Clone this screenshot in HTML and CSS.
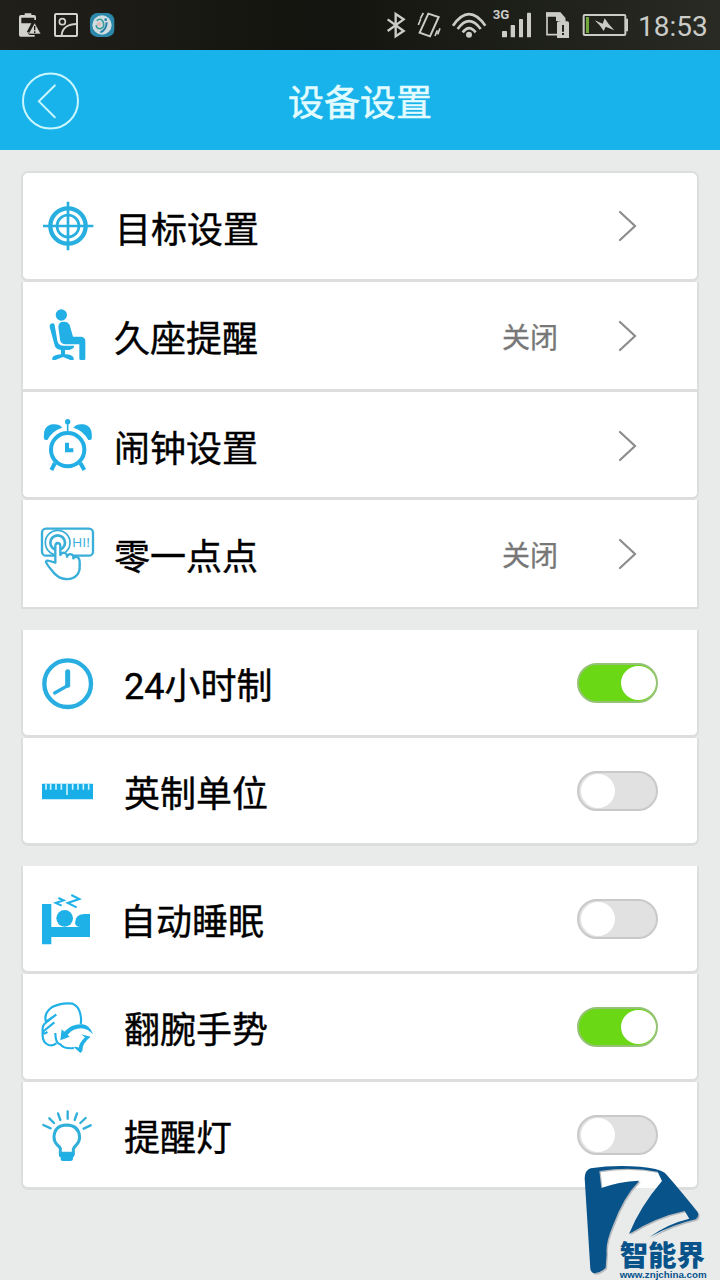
FILE: index.html
```html
<!DOCTYPE html>
<html lang="zh-CN">
<head>
<meta charset="utf-8">
<title>设备设置</title>
<link rel="stylesheet" href="styles.css">
</head>
<body>
<div class="screen">
  <div class="status">
    <svg class="status-left" viewBox="0 0 390 150">
      <path d="M74 45V40H94V45H102Q108 45 108 51V60H103V53H64V70H94L80 97H88V105H104V110H62Q57 110 57 105V51Q57 45 63 45Z" fill="#d2d2cf"/>
      <path d="M104 68L123 102H85Z" fill="#d2d2cf" stroke="#1c1b16" stroke-width="2"/>
      <path d="M104 78V91M104 94V99" stroke="#1c1b16" stroke-width="4"/>
      <rect x="165" y="42" width="66" height="66" rx="3" fill="none" stroke="#d2d2cf" stroke-width="6"/>
      <circle cx="187" cy="65" r="9" fill="none" stroke="#d2d2cf" stroke-width="5"/>
      <path d="M185 105C187 83 205 72 230 72" fill="none" stroke="#d2d2cf" stroke-width="6"/>
      <rect x="270" y="39" width="73" height="72" rx="22" fill="#2b88aa"/>
      <circle cx="306" cy="75" r="29" fill="#cfdde0"/>
      <path d="M290 62Q302 52 309 65Q316 82 302 86Q288 87 289 75" fill="none" stroke="#3c9a9b" stroke-width="5"/>
      <path d="M320 67Q319 91 301 97" fill="none" stroke="#287eab" stroke-width="6"/>
      <circle cx="317" cy="59" r="4" fill="#287eab"/>
      <circle cx="297" cy="72" r="6" fill="#e6b9b4"/>
    </svg>
    <svg class="status-right" viewBox="30 0 750 150">
      <g fill="none" stroke="#cbccc8">
        <path d="M53 58L101 93L77 109V42L101 58L53 93" stroke-width="7"/>
        <path d="M175 41L206 51L180 109L149 98Z" stroke-width="6"/>
        <path d="M152 57L145 75M160 39L151 56M202 91L195 108M210 85L203 103" stroke-width="5"/>
        <path d="M249 77Q297 8 346 77" stroke-width="8"/>
        <path d="M263 87Q297 40 332 87" stroke-width="8"/>
        <path d="M278 97Q297 72 317 97" stroke-width="8"/>
        <path d="M561 104H531V40H570L583 54V63" stroke-width="5"/>
        <rect x="641" y="45" width="125" height="60" rx="3" stroke-width="6"/>
      </g>
      <g fill="#cbccc8">
        <circle cx="297" cy="104" r="9"/>
        <rect x="396" y="93" width="15" height="19" rx="2"/>
        <rect x="422" y="75" width="13" height="37" rx="2"/>
        <rect x="447" y="57" width="12" height="55" rx="2"/>
        <rect x="471" y="38" width="12" height="74" rx="2"/>
        <path d="M528 37H571L586 54V63H558V50H528Z"/>
        <path d="M561 69Q561 64 566 64H571V59H586V64H592Q597 64 597 69V114H561Z"/>
        <path d="M768 56H774V94H768Z"/>
        <path d="M674 61L698 71L704 55L716 72L733 91L707 80L701 93L689 76Z"/>
      </g>
      <path d="M579 75V95M579 99V105" stroke="#22231d" stroke-width="6"/>
      <rect x="648" y="51" width="9" height="48" fill="#70a83c"/>
      <text class="network" x="368" y="56" textLength="50" lengthAdjust="spacingAndGlyphs">3G</text>
    </svg>
    <span class="clock">18:53</span>
  </div>

  <header class="header">
    <svg class="back" viewBox="66 214 172 174" fill="none" stroke="#c9f6ff">
      <circle cx="152" cy="301" r="83" stroke-width="6"/>
      <path d="M165 254L117 302L165 350" stroke-width="6" stroke-linecap="round"/>
    </svg>
    <h1 class="title">设备设置</h1>
  </header>

  <main class="list">
    <section class="group">
      <div class="row row-first">
        <svg class="icon" viewBox="84 39 180 318" fill="none" stroke="#28afe0">
          <circle cx="174" cy="198" r="53" stroke-width="13"/>
          <circle cx="174" cy="198" r="33" stroke-width="8"/>
          <path d="M174 125V271M99 198H250" stroke-width="8"/>
        </svg>
        <span class="label">目标设置</span>
        <svg class="arrow" viewBox="0 0 20 34"><path d="M2 3L17 17L2 31"/></svg>
      </div>
      <div class="row row-second">
        <svg class="icon" viewBox="84 366 180 321" fill="#22afe5">
          <circle cx="154" cy="465" r="17"/>
          <path d="M145 500Q146 485 160 485Q174 484 179 495L189 530H214Q225 531 226 542V597Q226 600 222 600H213Q208 600 208 596V553H165Q151 551 150 538Z"/>
          <path d="M119 501Q118 490 129 490Q133 490 134 496L142 542Q145 557 162 557H192V561Q188 569 174 570H165V583Q188 584 191 594V600H181L159 591L136 600H127V594Q129 585 153 583V570Q137 569 134 556Z"/>
        </svg>
        <span class="label">久座提醒</span><span class="value">关闭</span>
        <svg class="arrow" viewBox="0 0 20 34"><path d="M2 3L17 17L2 31"/></svg>
      </div>
      <div class="row row-third">
        <svg class="icon" viewBox="84 36 180 315" fill="#22afe5">
          <path d="M102 177Q98 137 127 133Q148 131 157 143Q128 151 112 180Q105 181 102 177ZM245 177Q249 137 220 133Q199 131 190 143Q219 151 235 180Q242 181 245 177Z"/>
          <circle cx="173" cy="209" r="50" fill="none" stroke="#22afe5" stroke-width="12"/>
          <circle cx="173" cy="125" r="8"/>
          <path d="M173 125V155" stroke="#22afe5" stroke-width="5"/>
          <path d="M171 188V211H190M135 249L124 270M211 249L223 270" fill="none" stroke="#22afe5" stroke-width="12"/>
        </svg>
        <span class="label">闹钟设置</span>
        <svg class="arrow" viewBox="0 0 20 34"><path d="M2 3L17 17L2 31"/></svg>
      </div>
      <div class="row row-fourth">
        <svg class="icon" viewBox="84 360 180 321" fill="none" stroke="#38aed9">
          <rect x="96" y="446" width="153" height="81" rx="12" stroke-width="7"/>
          <circle cx="143" cy="488" r="37" stroke-width="5"/>
          <circle cx="143" cy="488" r="22" stroke-width="8"/>
          <path d="M136 548V497Q137 489 143 489Q151 490 151 498V525Q155 516 164 519Q171 521 171 530Q176 519 186 524Q191 528 190 535Q199 526 206 535Q210 540 209 557Q210 575 201 585Q189 599 166 597Q143 595 127 573Q110 553 108 546Q109 540 119 543Z" fill="#fff" stroke-width="7" stroke-linejoin="round"/>
          <text class="hi" x="186" y="501" textLength="54" lengthAdjust="spacingAndGlyphs">HI!</text>
        </svg>
        <span class="label">零一点点</span><span class="value">关闭</span>
        <svg class="arrow" viewBox="0 0 20 34"><path d="M2 3L17 17L2 31"/></svg>
      </div>
    </section>

    <section class="group">
      <div class="row indented">
        <svg class="icon" viewBox="84 30 180 315" fill="none" stroke="#28aee0">
          <circle cx="173" cy="191" r="70" stroke-width="13"/>
          <path d="M173 155V196" stroke-width="15" stroke-linecap="round"/>
          <path d="M173 197L134 219" stroke-width="10" stroke-linecap="round"/>
        </svg>
        <span class="label">24小时制</span><span class="switch on"></span>
      </div>
      <div class="row indented">
        <svg class="icon" viewBox="84 354 180 315">
          <rect x="96" y="491" width="153" height="47" rx="2" fill="#18afe8"/>
          <path d="M108 492V509M122 492V509M138 492V509M154 492V509M171 492V525M188 492V509M204 492V509M220 492V509M236 492V509" stroke="#c6f3ff" stroke-width="5"/>
        </svg>
        <span class="label">英制单位</span><span class="switch"></span>
      </div>
    </section>

    <section class="group">
      <div class="row indented sleep">
        <svg class="icon" viewBox="84 18 180 315" fill="#1eb1e8">
          <path d="M96 132H124V201H211Q197 201 195 190Q195 163 222 162H240V231H124V253H96Z"/>
          <circle cx="164" cy="175" r="25"/>
          <path d="M145 114L161 121L137 129L155 137M184 105L208 117L173 129L200 142" fill="none" stroke="#1eb1e8" stroke-width="6"/>
        </svg>
        <span class="label">自动睡眠</span><span class="switch"></span>
      </div>
      <div class="row indented">
        <svg class="icon" viewBox="84 342 180 315" fill="none" stroke="#22b1e6" stroke-width="6.5" stroke-linejoin="round">
          <path d="M139 464L108 485Q100 461 125 442Q154 427 188 431Q206 438 211 462Q215 480 212 492M138 464L103 492Q96 500 98 516L133 487M98 516Q95 547 116 555Q130 559 139 550M98 516Q105 525 112 515M136 519Q136 551 151 553Q163 568 192 564"/>
          <path d="M151 541L155 508L163 515Q187 490 218 493Q241 497 249 523Q232 505 213 505Q190 505 173 524L179 530Z" fill="#22b1e6" stroke="none"/>
          <path d="M191 561L211 579L217 573Q216 550 242 530L213 523L225 532Q208 549 206 563Q200 559 191 561Z" fill="#22b1e6" stroke="none"/>
        </svg>
        <span class="label">翻腕手势</span><span class="switch on"></span>
      </div>
      <div class="row indented">
        <svg class="icon" viewBox="84 36 180 315" fill="none" stroke="#2fafd9">
          <path d="M151 250V235Q148 230 142 225Q132 215 132 202Q133 166 170 165Q207 166 209 202Q208 216 199 225Q192 231 190 237V250Z" stroke-width="9"/>
          <path d="M147 248H193V257Q193 261 189 262V268Q188 273 182 273H158Q152 273 152 268V262Q147 261 147 257Z" fill="#20afe4" stroke="none"/>
          <path d="M173 124V146M144 130L151 150M201 130L194 150M118 145L132 159M227 144L211 159M100 165L122 175M242 166L221 176" stroke-width="7" stroke-linecap="round"/>
        </svg>
        <span class="label">提醒灯</span><span class="switch"></span>
      </div>
    </section>
  </main>

  <svg class="watermark" viewBox="0 0 420 360">
    <defs>
      <g id="mark">
        <path d="M14 55Q15 30 32 25Q100 14 180 20Q235 24 254 38Q290 78 352 155Q360 168 347 178Q275 194 208 232Q260 192 328 176L314 153Q230 170 147 222Q180 140 246 63L233 35Q150 18 58 33L64 84Q115 65 178 62Q130 110 99 196Q76 250 80 280L77 323Q62 338 44 340Q33 339 31 326Z"/>
      </g>
    </defs>
    <path d="M58 33Q150 18 233 35L246 63Q180 140 147 222L80 280Q76 250 99 196Q130 110 178 62Q115 65 64 84Z" fill="#e8ebea"/>
    <path d="M58 33Q150 18 233 35L246 63L231 84H164L178 62Q115 65 64 84Z" fill="#fff"/>
    <use href="#mark" fill="#b5b9bd" transform="translate(4 4)"/>
    <use href="#mark" fill="#07538a"/>
    <text class="brand" x="119" y="317" textLength="256" lengthAdjust="spacingAndGlyphs">智能界</text>
    <text class="site" x="119" y="355" textLength="261" lengthAdjust="spacingAndGlyphs">www.znjchina.com</text>
  </svg>
</div>
</body>
</html>
```
FILE: styles.css
```css
* { box-sizing: border-box; }
body { margin: 0; background: #e8ebea; }
.screen {
  position: relative;
  width: 720px;
  height: 1280px;
  overflow: hidden;
  background: #e8ebea;
  font-family: Roboto, "Noto Sans CJK SC", sans-serif;
}
.status {
  display: flex;
  height: 50px;
  background: linear-gradient(90deg, #211f19, #13140f 45%, #282a23);
}
.status-left { width: 130px; height: 50px; }
.status-right { width: 250px; height: 50px; margin-left: 250px; }
.network { font: 700 38px Roboto, sans-serif; fill: #cbccc8; }
.clock { margin-left: 8px; font-size: 28px; line-height: 53px; color: #cbccc8; }
.header {
  display: flex;
  align-items: center;
  height: 100px;
  padding: 1px 0 0 22px;
  background: #19b3eb;
}
.back { width: 57px; height: 58px; }
.title {
  width: 562px;
  margin: 7px 0 0;
  color: #e2fcff;
  font-size: 36px;
  font-weight: 400;
  line-height: 50px;
  text-align: center;
  -webkit-text-stroke: 0.5px #e2fcff;
}
.list {
  display: flex;
  flex-direction: column;
  gap: 20px;
  padding: 21px 21px 0;
}
.group:first-child { margin-bottom: 1px; }
.row {
  display: flex;
  align-items: center;
  height: 108px;
  padding: 0 39px 0 15px;
  background: #fff;
  border: 2px solid #dcdedd;
  border-width: 0 2px 3px;
  border-radius: 0 0 7px 7px;
}
.row-first { height: 111px; padding-right: 59px; border-top-width: 2px; border-radius: 7px; }
.row-second { height: 110px; padding-right: 59px; border-radius: 0; }
.row-third { padding-right: 59px; }
.row-fourth { height: 109px; padding-right: 59px; border-bottom-width: 2px; border-radius: 0; }
.icon { align-self: stretch; flex: none; width: 60px; }
.label {
  flex: 1;
  padding: 9px 0 0 16px;
  color: #000;
  font-size: 36px;
  line-height: 50px;
  white-space: nowrap;
  -webkit-text-stroke: 0.4px #000;
}
.row-first .label { padding-left: 17px; }
.row-third .label { padding-top: 11px; }
.indented .label { padding-left: 26px; }
.sleep .label { padding-left: 22px; }
.value {
  margin-right: 60px;
  padding-top: 6px;
  color: #777;
  font-size: 28px;
  line-height: 40px;
  -webkit-text-stroke: 0.3px #777;
}
.arrow { flex: none; width: 20px; height: 34px; fill: none; stroke: #8c8c8c; stroke-width: 2.2; stroke-linecap: round; }
.row-third .arrow { margin-top: 2px; }
.hi { font: 38px "Open Sans", sans-serif; fill: #38aed9; stroke: none; }
.switch {
  display: flex;
  width: 81px;
  height: 40px;
  padding: 1px 2px;
  background: #e1e1e1;
  border: 2px solid #c9c9c9;
  border-radius: 20px;
}
.switch::before { content: ""; width: 34px; height: 34px; background: #fff; border-radius: 50%; }
.switch.on { justify-content: flex-end; padding-right: 0; background: #6bd816; border-color: #96c277; }
.switch.on::before { width: 35px; }
.watermark { position: absolute; left: 580px; top: 1160px; width: 140px; height: 120px; }
.brand { font: 900 86px "Noto Sans CJK SC", sans-serif; fill: #07538a; }
.site { font: 700 26px "Liberation Sans", sans-serif; fill: #07538a; }
```
